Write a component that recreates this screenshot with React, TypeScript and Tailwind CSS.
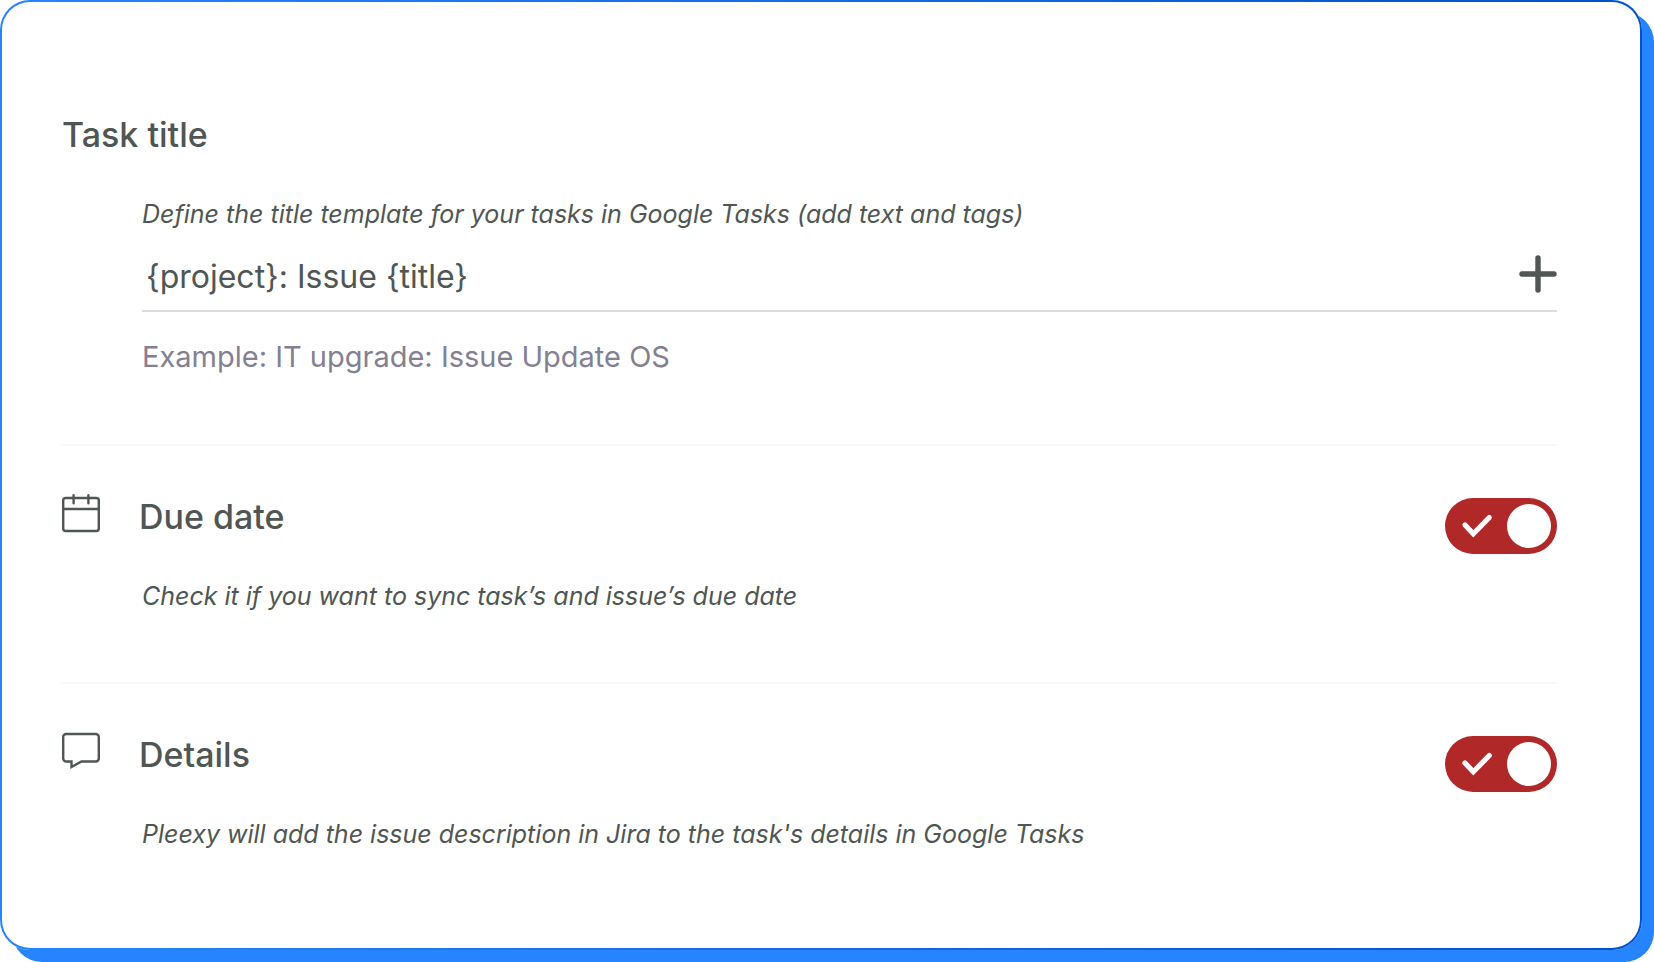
import { useState } from "react";
import type { ReactNode } from "react";

type OptionProps = {
    id: string
    title: string
    hint: string
    icon: ReactNode
}

const CalendarIcon = () => (
    <svg viewBox="0 0 38 40" fill="none" stroke="currentColor" strokeWidth={2.4} className="w-[38px] h-10">
        <rect x="1.2" y="5" width="35.600" height="33" rx="2.5" />
        <path d="M1 16h36" />
        <path strokeLinecap="round" d="M11.6 2.200v8M26.4 2.200v8" />
    </svg>
)

const CommentIcon = () => (
    <svg viewBox="0 0 38 40" fill="none" stroke="currentColor" strokeWidth={2.4} className="w-[38px] h-10">
        <path d="M4.200 3h29.600a3 3 0 0 1 3 3v21.500a3 3 0 0 1-3 3H19.500L9.500 36v-5.500H4.200a3 3 0 0 1-3-3V6a3 3 0 0 1 3-3z" />
    </svg>
)

const PlusIcon = () => (
    <svg viewBox="0 0 38 38" fill="none" stroke="currentColor" strokeWidth={5.4} strokeLinecap="round" className="w-[38px] h-[38px]">
        <path d="M19 3v32M3 19h32" />
    </svg>
)

function Toggle({ id }: { id: string }) {
    const [checked, setChecked] = useState(true);

    return (
        <span className="relative block w-28 h-14 shrink-0">
            <input
                id={id}
                type="checkbox"
                checked={checked}
                onChange={() => setChecked(!checked)}
                className="block w-full h-full rounded-full appearance-none cursor-pointer bg-gray-300 checked:bg-[#b12829]"
            />
            <svg viewBox="0 0 112 56" className="absolute inset-0 pointer-events-none">
                {checked && <path d="M20 27l8.300 8.800 16-16.300" fill="none" stroke="white" strokeWidth={5.2} strokeLinecap="round" />}
                <circle cx={checked ? 84 : 28} cy="28" r="22" fill="white" />
            </svg>
        </span>
    )
}

function Option({ id, title, hint, icon }: OptionProps) {
    return (
        <section className="flex items-start border-t-2 border-[#f8f8f8] pt-[52px] pb-[70px]">
            <div className="-mt-[5px] w-[77px] shrink-0">{icon}</div>
            <div className="flex-1">
                <label htmlFor={id} className="block text-[34px] leading-[38px] font-medium">{title}</label>
                <p className="mt-11 pl-[3px] text-[25px] leading-8 italic">{hint}</p>
            </div>
            <Toggle id={id} />
        </section>
    )
}

export default function App() {
    const [template, setTemplate] = useState("{project}: Issue {title}");

    return (
        <main className="pr-3 pb-3 bg-white font-['Inter',sans-serif] text-[#4f5654]">
            <div className="rounded-[30px] bg-linear-to-r from-[#2684ff] to-[#0052cc] p-0.5 shadow-[12px_12px_0_#2684ff]">
                <div className="rounded-[28px] bg-white pt-[114px] pr-[83px] pb-7 pl-[60px]">
                    <section className="pb-[69px]">
                        <h2 className="text-[34px] leading-[38px] font-medium">Task title</h2>
                        <div className="pl-20 mt-11">
                            <label htmlFor="template" className="block text-[25px] leading-8 italic">
                                Define the title template for your tasks in Google Tasks (add text and tags)
                            </label>
                            <div className="flex items-start mt-[27px] pb-[13px] border-b-2 border-[#dcdcdc]">
                                <input
                                    id="template"
                                    type="text"
                                    value={template}
                                    onChange={(e) => setTemplate(e.target.value)}
                                    className="flex-1 min-w-0 h-10 pl-1 text-[32px] leading-10 outline-none"
                                />
                                <button type="button" aria-label="Add tag" className="-mt-0.5">
                                    <PlusIcon />
                                </button>
                            </div>
                            <p className="mt-[27px] text-[29px] leading-9 text-[#848093]">Example: IT upgrade: Issue Update OS</p>
                        </div>
                    </section>
                    <Option
                        id="due-date"
                        title="Due date"
                        hint="Check it if you want to sync task’s and issue’s due date"
                        icon={<CalendarIcon />}
                    />
                    <Option
                        id="details"
                        title="Details"
                        hint="Pleexy will add the issue description in Jira to the task's details in Google Tasks"
                        icon={<CommentIcon />}
                    />
                </div>
            </div>
        </main>
    )
}
